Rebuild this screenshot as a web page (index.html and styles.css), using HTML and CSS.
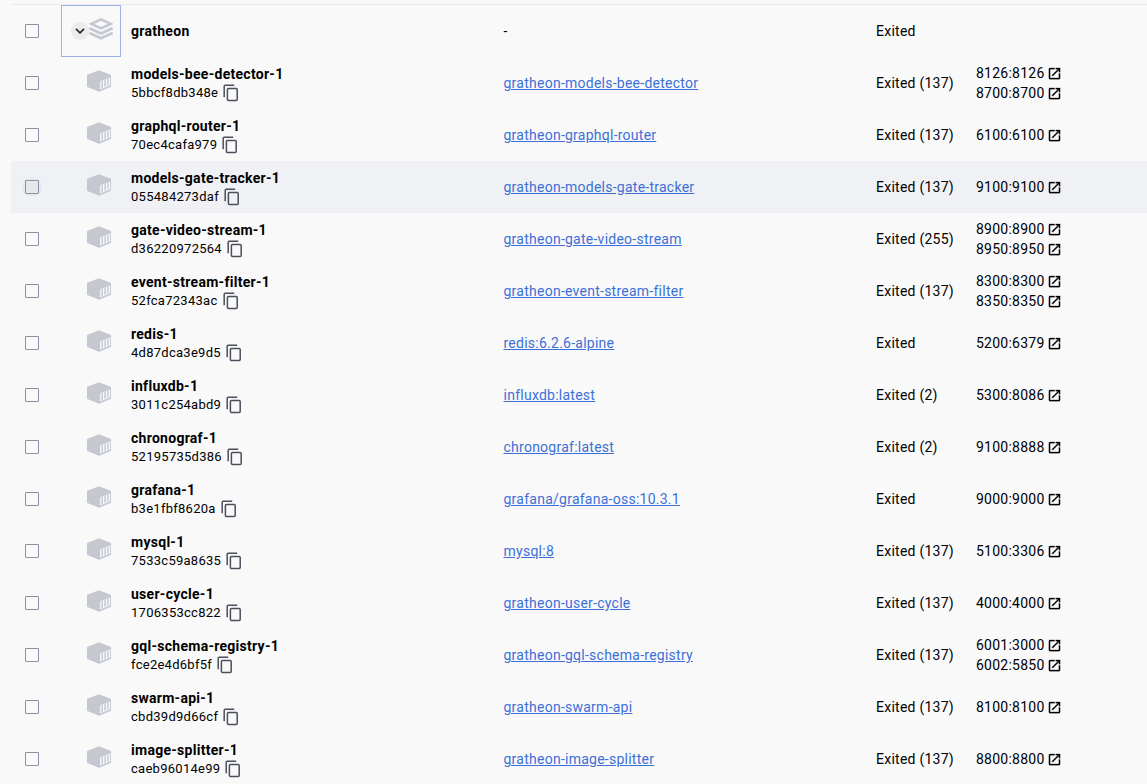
FILE: index.html
```
<!DOCTYPE html>
<html lang="en">
<head>
<meta charset="utf-8">
<title>Containers</title>
<link rel="stylesheet" href="styles.css">
</head>
<body>
<svg class="sprite" aria-hidden="true">
  <symbol id="box" viewBox="0 0 24 22">
    <path fill="#c5c7d1" d="M12 0.2 23.6 4.8Q24 5 24 5.5V16.4Q24 16.9 23.6 17.1L12 21.8 0.4 17.1Q0 16.9 0 16.4V5.5Q0 5 0.4 4.8Z"/>
    <path fill="none" stroke="#f9f9fa" stroke-width="1.4" d="M13.8 11.6v7.4M16.7 10.5v7.4M19.6 9.4v7.4M22.4 8.2v7.4"/>
    <path fill="none" stroke="#f9f9fa" stroke-width=".6" d="M13.2 11.8 23 7.9M13.2 19 23 15.2"/>
  </symbol>
  <symbol id="stack" viewBox="0 0 24 22">
    <path fill="none" stroke="#c5c7d1" stroke-width="2.6" d="M12 1.4 21.6 5.9 12 10.4 2.4 5.9Z"/>
    <path fill="none" stroke="#c5c7d1" stroke-width="2.7" d="M.4 10.1 12 15.5 23.6 10.1M.4 14.9 12 20.3 23.6 14.9"/>
  </symbol>
  <symbol id="copy" viewBox="0 0 16 18">
    <path fill="none" stroke="#4b4e5c" stroke-width="1.5" d="M1.2 13.2V2.2Q1.2 1.2 2.2 1.2H11.2"/>
    <rect fill="none" stroke="#4b4e5c" stroke-width="1.5" x="4.4" y="4.4" width="9.8" height="12" rx="1"/>
  </symbol>
  <symbol id="open" viewBox="0 0 24 24">
    <path stroke="#000" stroke-width=".4" d="M19 19H5V5h7V3H5c-1.11 0-2 .9-2 2v14c0 1.1.89 2 2 2h14c1.1 0 2-.9 2-2v-7h-2v7zM14 3v2h3.59l-9.83 9.83 1.41 1.41L19 6.41V10h2V3h-7z"/>
  </symbol>
</svg>
<main class="table">
  <div class="row">
    <span class="check"></span>
    <div class="expander"><span class="chevron"><svg viewBox="0 0 10 6"><path d="M1 .9 5 4.9 9 .9"/></svg></span><svg class="stack"><use href="#stack"/></svg></div>
    <div class="name"><b>gratheon</b></div>
    <div class="image">-</div>
    <div class="status">Exited</div>
    <div class="ports"></div>
  </div>
  <div class="row">
    <span class="check"></span><svg class="box"><use href="#box"/></svg>
    <div class="name"><b>models-bee-detector-1</b><span class="id">5bbcf8db348e<svg class="copy"><use href="#copy"/></svg></span></div>
    <div class="image"><a href="#">gratheon-models-bee-detector</a></div>
    <div class="status">Exited (137)</div>
    <div class="ports"><span>8126:8126<svg><use href="#open"/></svg></span><span>8700:8700<svg><use href="#open"/></svg></span></div>
  </div>
  <div class="row">
    <span class="check"></span><svg class="box"><use href="#box"/></svg>
    <div class="name"><b>graphql-router-1</b><span class="id">70ec4cafa979<svg class="copy"><use href="#copy"/></svg></span></div>
    <div class="image"><a href="#">gratheon-graphql-router</a></div>
    <div class="status">Exited (137)</div>
    <div class="ports"><span>6100:6100<svg><use href="#open"/></svg></span></div>
  </div>
  <div class="row hovered">
    <span class="check"></span><svg class="box"><use href="#box"/></svg>
    <div class="name"><b>models-gate-tracker-1</b><span class="id">055484273daf<svg class="copy"><use href="#copy"/></svg></span></div>
    <div class="image"><a href="#">gratheon-models-gate-tracker</a></div>
    <div class="status">Exited (137)</div>
    <div class="ports"><span>9100:9100<svg><use href="#open"/></svg></span></div>
  </div>
  <div class="row">
    <span class="check"></span><svg class="box"><use href="#box"/></svg>
    <div class="name"><b>gate-video-stream-1</b><span class="id">d36220972564<svg class="copy"><use href="#copy"/></svg></span></div>
    <div class="image"><a href="#">gratheon-gate-video-stream</a></div>
    <div class="status">Exited (255)</div>
    <div class="ports"><span>8900:8900<svg><use href="#open"/></svg></span><span>8950:8950<svg><use href="#open"/></svg></span></div>
  </div>
  <div class="row">
    <span class="check"></span><svg class="box"><use href="#box"/></svg>
    <div class="name"><b>event-stream-filter-1</b><span class="id">52fca72343ac<svg class="copy"><use href="#copy"/></svg></span></div>
    <div class="image"><a href="#">gratheon-event-stream-filter</a></div>
    <div class="status">Exited (137)</div>
    <div class="ports"><span>8300:8300<svg><use href="#open"/></svg></span><span>8350:8350<svg><use href="#open"/></svg></span></div>
  </div>
  <div class="row">
    <span class="check"></span><svg class="box"><use href="#box"/></svg>
    <div class="name"><b>redis-1</b><span class="id">4d87dca3e9d5<svg class="copy"><use href="#copy"/></svg></span></div>
    <div class="image"><a href="#">redis:6.2.6-alpine</a></div>
    <div class="status">Exited</div>
    <div class="ports"><span>5200:6379<svg><use href="#open"/></svg></span></div>
  </div>
  <div class="row">
    <span class="check"></span><svg class="box"><use href="#box"/></svg>
    <div class="name"><b>influxdb-1</b><span class="id">3011c254abd9<svg class="copy"><use href="#copy"/></svg></span></div>
    <div class="image"><a href="#">influxdb:latest</a></div>
    <div class="status">Exited (2)</div>
    <div class="ports"><span>5300:8086<svg><use href="#open"/></svg></span></div>
  </div>
  <div class="row">
    <span class="check"></span><svg class="box"><use href="#box"/></svg>
    <div class="name"><b>chronograf-1</b><span class="id">52195735d386<svg class="copy"><use href="#copy"/></svg></span></div>
    <div class="image"><a href="#">chronograf:latest</a></div>
    <div class="status">Exited (2)</div>
    <div class="ports"><span>9100:8888<svg><use href="#open"/></svg></span></div>
  </div>
  <div class="row">
    <span class="check"></span><svg class="box"><use href="#box"/></svg>
    <div class="name"><b>grafana-1</b><span class="id">b3e1fbf8620a<svg class="copy"><use href="#copy"/></svg></span></div>
    <div class="image"><a href="#">grafana/grafana-oss:10.3.1</a></div>
    <div class="status">Exited</div>
    <div class="ports"><span>9000:9000<svg><use href="#open"/></svg></span></div>
  </div>
  <div class="row">
    <span class="check"></span><svg class="box"><use href="#box"/></svg>
    <div class="name"><b>mysql-1</b><span class="id">7533c59a8635<svg class="copy"><use href="#copy"/></svg></span></div>
    <div class="image"><a href="#">mysql:8</a></div>
    <div class="status">Exited (137)</div>
    <div class="ports"><span>5100:3306<svg><use href="#open"/></svg></span></div>
  </div>
  <div class="row">
    <span class="check"></span><svg class="box"><use href="#box"/></svg>
    <div class="name"><b>user-cycle-1</b><span class="id">1706353cc822<svg class="copy"><use href="#copy"/></svg></span></div>
    <div class="image"><a href="#">gratheon-user-cycle</a></div>
    <div class="status">Exited (137)</div>
    <div class="ports"><span>4000:4000<svg><use href="#open"/></svg></span></div>
  </div>
  <div class="row">
    <span class="check"></span><svg class="box"><use href="#box"/></svg>
    <div class="name"><b>gql-schema-registry-1</b><span class="id">fce2e4d6bf5f<svg class="copy"><use href="#copy"/></svg></span></div>
    <div class="image"><a href="#">gratheon-gql-schema-registry</a></div>
    <div class="status">Exited (137)</div>
    <div class="ports"><span>6001:3000<svg><use href="#open"/></svg></span><span>6002:5850<svg><use href="#open"/></svg></span></div>
  </div>
  <div class="row">
    <span class="check"></span><svg class="box"><use href="#box"/></svg>
    <div class="name"><b>swarm-api-1</b><span class="id">cbd39d9d66cf<svg class="copy"><use href="#copy"/></svg></span></div>
    <div class="image"><a href="#">gratheon-swarm-api</a></div>
    <div class="status">Exited (137)</div>
    <div class="ports"><span>8100:8100<svg><use href="#open"/></svg></span></div>
  </div>
  <div class="row">
    <span class="check"></span><svg class="box"><use href="#box"/></svg>
    <div class="name"><b>image-splitter-1</b><span class="id">caeb96014e99<svg class="copy"><use href="#copy"/></svg></span></div>
    <div class="image"><a href="#">gratheon-image-splitter</a></div>
    <div class="status">Exited (137)</div>
    <div class="ports"><span>8800:8800<svg><use href="#open"/></svg></span></div>
  </div>
</main>
</body>
</html>
```

FILE: styles.css
```
* { box-sizing: border-box; }

body {
  margin: 0;
  height: 784px;
  overflow: hidden;
  background: #f9f9fa;
  color: #000;
  font: 14px/20px Roboto, sans-serif;
  letter-spacing: 0.25px;
}

.sprite { display: none; }

.table {
  margin: 4px 0 0 11px;
  border-top: 1px solid #ebebed;
}

.row {
  display: grid;
  grid-template-columns: 50px 70px 372.5px 372.5px 100px 1fr;
  align-items: center;
  height: 52px;
}

.hovered { background: #f0f1f4; }

.check {
  display: flex;
  align-items: center;
  justify-content: center;
  width: 20px;
  height: 20px;
  margin-left: 11px;
  border-radius: 50%;
}

.check::before {
  content: "";
  width: 12px;
  height: 12px;
  border: 1px solid #8b90a5;
  border-radius: 1px;
}

.hovered .check { background: #e7e8ec; }

.expander {
  display: flex;
  align-items: center;
  width: 60px;
  height: 52px;
  padding-left: 9px;
  border: 1px solid #9bb2e6;
}

.chevron {
  display: flex;
  align-items: center;
  justify-content: center;
  width: 18px;
  height: 18px;
  border-radius: 50%;
  background: #ebebec;
}

.chevron svg { width: 10px; height: 6px; }

.chevron path {
  fill: none;
  stroke: #25262d;
  stroke-width: 1.6;
}

.stack { width: 24px; height: 22px; margin-bottom: 4px; }

.box { width: 24px; height: 22px; margin: 0 0 4px 26px; }

.name b { display: block; font-weight: 700; letter-spacing: 0.28px; }

.id {
  display: flex;
  align-items: center;
  height: 18px;
  font-size: 13px;
  letter-spacing: 0.27px;
}

.copy { width: 16px; height: 18px; margin-left: 5px; }

.image a {
  color: #3d70d6;
  text-decoration: underline;
}

.ports span { display: flex; align-items: center; }

.ports svg { width: 15px; height: 15px; margin-left: 2.5px; }
```
